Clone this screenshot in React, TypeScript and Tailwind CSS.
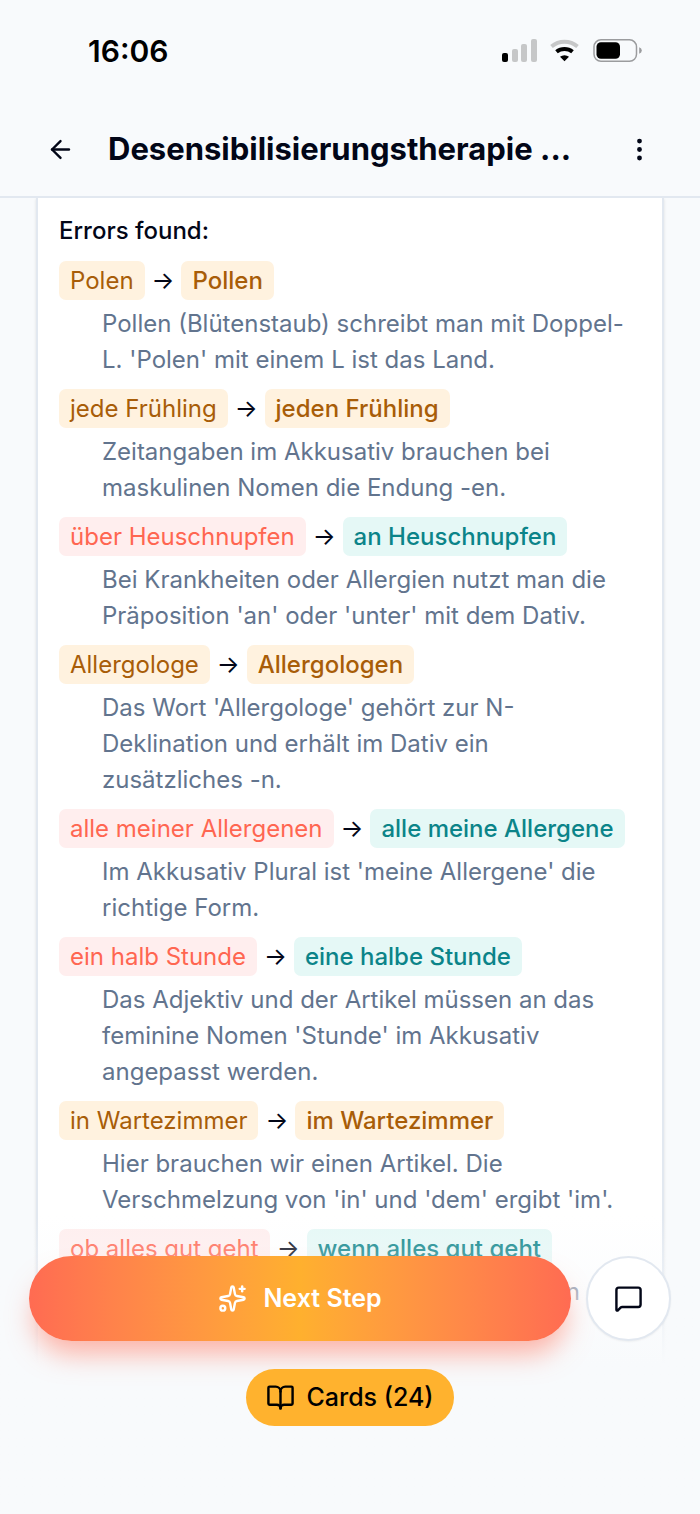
import { ArrowLeft, BookOpen, EllipsisVertical, MessageSquare, Sparkles } from "lucide-react";

type Kind = "hint" | "error";

interface Correction {
  wrong: string;
  right: string;
  kind: Kind;
  note: string;
}

const corrections: Correction[] = [
  { wrong: "Polen", right: "Pollen", kind: "hint", note: "Pollen (Blütenstaub) schreibt man mit Doppel-L. 'Polen' mit einem L ist das Land." },
  { wrong: "jede Frühling", right: "jeden Frühling", kind: "hint", note: "Zeitangaben im Akkusativ brauchen bei maskulinen Nomen die Endung -en." },
  { wrong: "über Heuschnupfen", right: "an Heuschnupfen", kind: "error", note: "Bei Krankheiten oder Allergien nutzt man die Präposition 'an' oder 'unter' mit dem Dativ." },
  { wrong: "Allergologe", right: "Allergologen", kind: "hint", note: "Das Wort 'Allergologe' gehört zur N-Deklination und erhält im Dativ ein zusätzliches -n." },
  { wrong: "alle meiner Allergenen", right: "alle meine Allergene", kind: "error", note: "Im Akkusativ Plural ist 'meine Allergene' die richtige Form." },
  { wrong: "ein halb Stunde", right: "eine halbe Stunde", kind: "error", note: "Das Adjektiv und der Artikel müssen an das feminine Nomen 'Stunde' im Akkusativ angepasst werden." },
  { wrong: "in Wartezimmer", right: "im Wartezimmer", kind: "hint", note: "Hier brauchen wir einen Artikel. Die Verschmelzung von 'in' und 'dem' ergibt 'im'." },
  { wrong: "ob alles gut geht", right: "wenn alles gut geht", kind: "error", note: "Für Bedingungen in der Zukunft nutzt man" },
];

const chipColors = {
  hint: { wrong: "bg-[#fff2df] text-[#a85d08]", right: "bg-[#fff2df] text-[#a85d08]" },
  error: { wrong: "bg-[#ffeeee] text-[#ff6651]", right: "bg-[#e5f8f6] text-[#0b8489]" },
};

export default function App() {
  return (
    <div className="relative flex h-screen flex-col overflow-hidden bg-[#f8fafc] font-['Inter',sans-serif] text-[#020617]">
      <StatusBar />

      <header className="flex h-24 shrink-0 items-center border-b-2 border-slate-200 pr-12 pl-[46px]">
        <button type="button" aria-label="Back" className="shrink-0">
          <ArrowLeft size={29} />
        </button>
        <h1 className="ml-[33px] min-w-0 flex-1 truncate text-[31px] leading-10 font-bold">
          Desensibilisierungstherapie ...
        </h1>
        <button type="button" aria-label="More options" className="-mr-[2px] shrink-0">
          <EllipsisVertical size={29} />
        </button>
      </header>

      <main className="min-h-0 flex-1 overflow-hidden px-9">
        <section className="border-x-2 border-slate-200 bg-white px-[21px] pt-[15px] pb-28 shadow-sm">
          <h2 className="text-2xl leading-9 font-medium">Errors found:</h2>
          <ul className="mt-3 flex flex-col gap-[11px]">
            {corrections.map((item) => (
              <CorrectionItem key={item.wrong} item={item} />
            ))}
          </ul>
        </section>
      </main>

      {/* Floating action area */}
      <div className="absolute inset-x-0 bottom-0 flex flex-col items-center gap-7 bg-linear-to-t from-[#f8fafc] via-[#f8fafc] to-transparent px-[29px] pt-10 pb-[88px]">
        <div className="flex w-full items-center gap-[15px]">
          <button
            type="button"
            className="flex h-[85px] flex-1 items-center justify-center gap-4 rounded-full bg-linear-to-r from-[#ff6b52] via-[#ffb02e] to-[#ff6b52] text-[25px] font-semibold text-white shadow-[0_18px_27px_-5px_rgba(255,107,82,0.5)]"
          >
            <Sparkles size={29} />
            Next Step
          </button>
          <button
            type="button"
            aria-label="Open chat"
            className="flex size-[85px] shrink-0 items-center justify-center rounded-full border-2 border-slate-200 bg-white shadow-xs"
          >
            <MessageSquare size={29} />
          </button>
        </div>
        <button
          type="button"
          className="flex h-[57px] items-center gap-[11px] rounded-full bg-[#ffb22e] px-5 text-[25px] font-medium text-black"
        >
          <BookOpen size={29} />
          Cards (24)
        </button>
      </div>
    </div>
  );
}

function CorrectionItem({ item }: { item: Correction }) {
  const colors = chipColors[item.kind];
  return (
    <li>
      <div className="flex items-center gap-[7px] text-2xl leading-[39px]">
        <span className={`rounded-[7px] px-[11px] leading-[39px] whitespace-nowrap ${colors.wrong}`}>{item.wrong}</span>
        <span>→</span>
        <span className={`rounded-[7px] px-[11px] leading-[39px] font-medium whitespace-nowrap ${colors.right}`}>{item.right}</span>
      </div>
      <p className="mt-[6px] pr-2 pl-[43px] text-2xl leading-9 text-slate-500">{item.note}</p>
    </li>
  );
}

function StatusBar() {
  return (
    <div className="flex h-[102px] shrink-0 items-center justify-between pr-[58px] pl-[88px] text-black">
      <span className="text-[30px] leading-9 font-semibold">16:06</span>
      <svg width="140" height="24" viewBox="0 0 140 24" aria-hidden="true">
        <rect x="0" y="14" width="6" height="9" rx="2" fill="#000" />
        <rect x="10" y="10" width="6" height="13" rx="2" fill="#c6c7c8" />
        <rect x="19" y="5" width="6" height="18" rx="2" fill="#c6c7c8" />
        <rect x="29" y="0" width="6" height="23" rx="2" fill="#c6c7c8" />
        <path d="M49.500 7.500A20 20 0 0 1 75.500 7.500" fill="none" stroke="#c6c7c8" strokeWidth="4" />
        <path d="M54.500 12.800A12.600 12.600 0 0 1 70.500 12.800" fill="none" stroke="#000" strokeWidth="4" />
        <path d="M58 17.800A7 7 0 0 1 67 17.800L62.500 22.300Z" fill="#000" />
        <rect x="92" y="0.800" width="42.500" height="21.500" rx="7" fill="none" stroke="#9b9c9e" strokeWidth="1.500" />
        <rect x="94.500" y="3.200" width="23.500" height="16.500" rx="4.500" fill="#000" />
        <path d="M137.200 8.200Q139.800 9.200 139.800 11.500T137.200 14.800Z" fill="#9b9c9e" />
      </svg>
    </div>
  );
}
